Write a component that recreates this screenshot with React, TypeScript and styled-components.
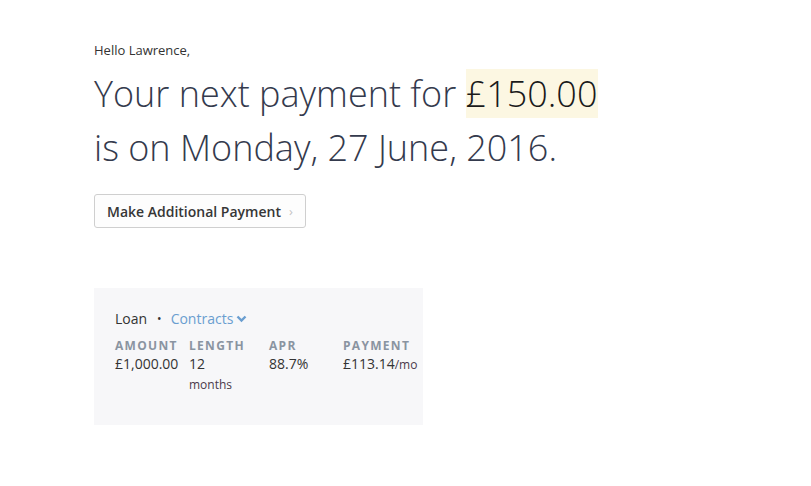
import React from "react";
import styled, { createGlobalStyle } from "styled-components";

const GlobalStyle = createGlobalStyle`
  html, body {
    margin: 0;
    padding: 0;
    background: #fff;
    font-family: "Open Sans", "Liberation Sans", sans-serif;
    color: #333;
  }
`;

const Page = styled.main`
  padding: 40px 94px;
  display: flex;
  flex-direction: column;
  align-items: flex-start;
`;

const Greeting = styled.p`
  margin: 0;
  font-size: 13px;
  line-height: 20px;
  color: #333;
`;

const Headline = styled.h1`
  margin: 7px 0 0 0;
  font-size: 36px;
  font-weight: 300;
  line-height: 54px;
  color: #343a4d;
`;

const Highlight = styled.span`
  background: #fcf7e2;
  color: #1a1a1a;
  padding: 0 1px 0 0;
`;

const PayButton = styled.button`
  margin-top: 19px;
  height: 34px;
  padding: 0 12px 0 12px;
  display: flex;
  align-items: center;
  gap: 8px;
  background: #fdfdfd;
  border: 1px solid #cfcfcf;
  border-radius: 3px;
  font-family: "Open Sans", "Liberation Sans", sans-serif;
  font-size: 14px;
  font-weight: 600;
  color: #363636;
  cursor: pointer;
`;

const Chevron = styled.span`
  color: #c4c4c4;
  font-weight: 400;
  font-size: 13px;
`;

const Card = styled.section`
  margin-top: 60px;
  width: 329px;
  box-sizing: border-box;
  padding: 21px 21px 29px 21px;
  background: #f7f7f9;
`;

const CardHead = styled.div`
  display: flex;
  align-items: center;
  font-size: 14px;
  line-height: 20px;
  color: #333;
`;

const Dot = styled.span`
  margin: 0 9px 0 10px;
  font-size: 12px;
`;

const Link = styled.a`
  color: #6a9ed0;
  display: flex;
  align-items: center;
  gap: 3px;
  text-decoration: none;
`;

const Grid = styled.div`
  margin-top: 9px;
  display: grid;
  grid-template-columns: 74px 80px 74px auto;
`;

const Label = styled.div`
  font-size: 12px;
  font-weight: 700;
  letter-spacing: 1.3px;
  text-transform: uppercase;
  color: #8a94a1;
  line-height: 16px;
`;

const Value = styled.div`
  font-size: 14px;
  line-height: 20px;
  color: #333;
  white-space: nowrap;
`;

const Unit = styled.span<{ $block?: boolean }>`
  font-size: 12px;
  color: #4a3a4a;
  display: ${(p) => (p.$block ? "block" : "inline")};
  line-height: ${(p) => (p.$block ? "22px" : "inherit")};
`;

const stats = [
  { label: "Amount", value: "£1,000.00" },
  { label: "Length", value: "12", unit: "months", block: true },
  { label: "APR", value: "88.7%" },
  { label: "Payment", value: "£113.14", unit: "/mo" },
];

export default function App() {
  return (
    <>
      <GlobalStyle />
      <Page>
        <Greeting>Hello Lawrence,</Greeting>
        <Headline>
          Your next payment for <Highlight>£150.00</Highlight>
          <br />
          is on Monday, 27 June, 2016.
        </Headline>
        <PayButton>
          Make Additional Payment <Chevron>›</Chevron>
        </PayButton>
        <Card>
          <CardHead>
            Loan <Dot>•</Dot>
            <Link href="#">
              Contracts
              <svg width="11" height="8" viewBox="0 0 11 8">
                <path d="M1.5 1.5 L5.5 5.5 L9.5 1.5" stroke="#6a9ed0" strokeWidth="2.4" fill="none" />
              </svg>
            </Link>
          </CardHead>
          <Grid>
            {stats.map((s) => (
              <div key={s.label}>
                <Label>{s.label}</Label>
                <Value>
                  {s.value}
                  {s.unit && <Unit $block={s.block}>{s.unit}</Unit>}
                </Value>
              </div>
            ))}
          </Grid>
        </Card>
      </Page>
    </>
  );
}
